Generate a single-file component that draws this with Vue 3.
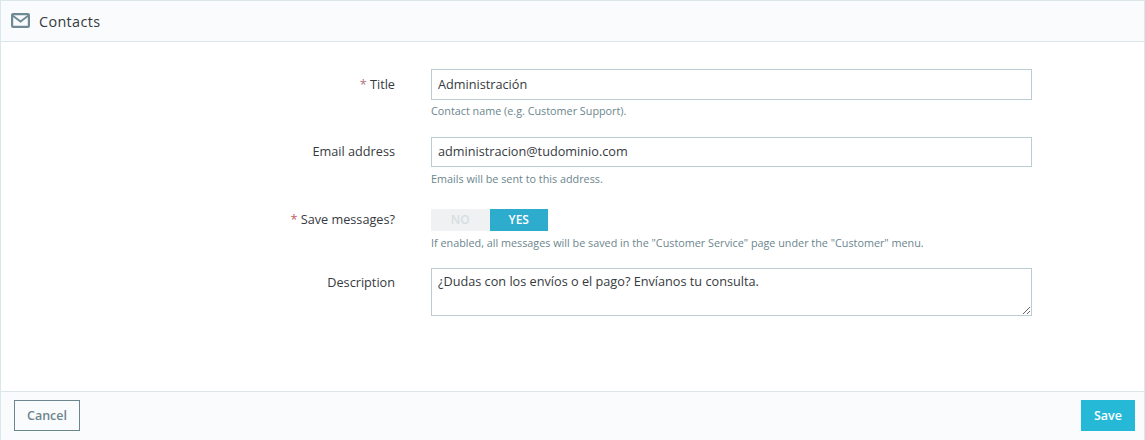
<script setup>
const title = 'Administración'
const email = 'administracion@tudominio.com'
const description = '¿Dudas con los envíos o el pago? Envíanos tu consulta.'
</script>

<template>
  <div class="panel">
    <header class="head">
      <svg class="mail" width="19" height="15" viewBox="0 0 19 15" fill="none" stroke="#6f8a94" stroke-width="2.2">
        <rect x="1.1" y="1.1" width="16.8" height="12.8" rx="1" />
        <path d="M1.5 2.5l8 6 8-6" stroke-width="1.8" />
      </svg>
      <span>Contacts</span>
    </header>
    <main class="body">
      <div class="row r1">
        <label class="lab"><em>*</em> Title</label>
        <div class="ctl">
          <input class="inp" :value="title" />
          <p class="help">Contact name (e.g. Customer Support).</p>
        </div>
      </div>
      <div class="row r2">
        <label class="lab">Email address</label>
        <div class="ctl">
          <input class="inp" :value="email" />
          <p class="help">Emails will be sent to this address.</p>
        </div>
      </div>
      <div class="row r3">
        <label class="lab"><em class="red">*</em> Save messages?</label>
        <div class="ctl">
          <div class="sw"><span class="no">NO</span><span class="yes">YES</span></div>
          <p class="help">If enabled, all messages will be saved in the "Customer Service" page under the "Customer" menu.</p>
        </div>
      </div>
      <div class="row r4">
        <label class="lab">Description</label>
        <div class="ctl">
          <textarea class="inp ta" :value="description"></textarea>
        </div>
      </div>
    </main>
    <footer class="foot">
      <button class="cancel">Cancel</button>
      <button class="save">Save</button>
    </footer>
  </div>
</template>

<style>
html, body { margin: 0; background: #fff; }
</style>

<style scoped>
.panel { width: 1145px; height: 440px; box-sizing: border-box; display: flex; flex-direction: column; border: 1px solid #dbe6e9; border-bottom: 0; font-family: "Open Sans", sans-serif; color: #363a41; font-size: 12px; overflow: hidden; }
.head { height: 41px; flex: none; box-sizing: border-box; background: #fafbfc; border-bottom: 1px solid #dbe6e9; display: flex; align-items: center; gap: 9px; padding: 0 0 0 10px; font-size: 14.4px; font-weight: 400; letter-spacing: 0.35px; }
.mail { flex: none; margin-top: -1px; }
.body { flex: 1; padding-top: 27px; }
.row { display: flex; }
.r1 { height: 68px; }
.r2 { height: 72px; }
.r3 { height: 59px; }
.lab { width: 394px; text-align: right; padding-top: 6px; font-size: 12.7px; box-sizing: border-box; line-height: 18px; }
.r2 .lab { padding-top: 5px; }
.r3 .lab { padding-top: 1px; }
.r4 .lab { padding-top: 5px; }
.lab em { font-style: normal; color: #b5737b; }
.lab em.red { color: #c05c67; }
.ctl { margin-left: 36px; width: 601px; }
.inp { display: block; width: 601px; height: 31px; box-sizing: border-box; border: 1px solid #bbcdd2; padding: 0 6px 2px; font: 12.7px "Open Sans", sans-serif; color: #363a41; background: #fff; outline: 0; border-radius: 0; }
.r2 .inp { height: 30px; padding-bottom: 3px; }
.ta { height: 48px; padding: 3px 6px; resize: vertical; line-height: 18px; }
.help { margin: 4px 0 0; font-size: 10.8px; line-height: 15px; color: #6c868e; white-space: nowrap; }
.r1 .help { margin-top: 3px; }
.sw { display: flex; width: 117px; height: 22px; font-size: 12px; font-weight: 600; line-height: 22px; text-align: center; }
.sw span { width: 59px; }
.no { background: #eff1f2; color: #d5dfe2; }
.yes { background: #2eacce; color: #fff; }
.foot { height: 49px; flex: none; box-sizing: border-box; background: #fafbfc; border-top: 1px solid #dbe6e9; display: flex; justify-content: space-between; align-items: flex-start; padding: 8px 9px 0 13px; }
button { font: 600 12.5px "Open Sans", sans-serif; box-sizing: border-box; border-radius: 0; cursor: pointer; }
.cancel { width: 66px; height: 31px; border: 1px solid #6c868e; color: #6c868e; background: transparent; }
.save { width: 54px; height: 31px; background: #25b9d7; border: 1px solid #25b9d7; color: #fff; }
</style>
